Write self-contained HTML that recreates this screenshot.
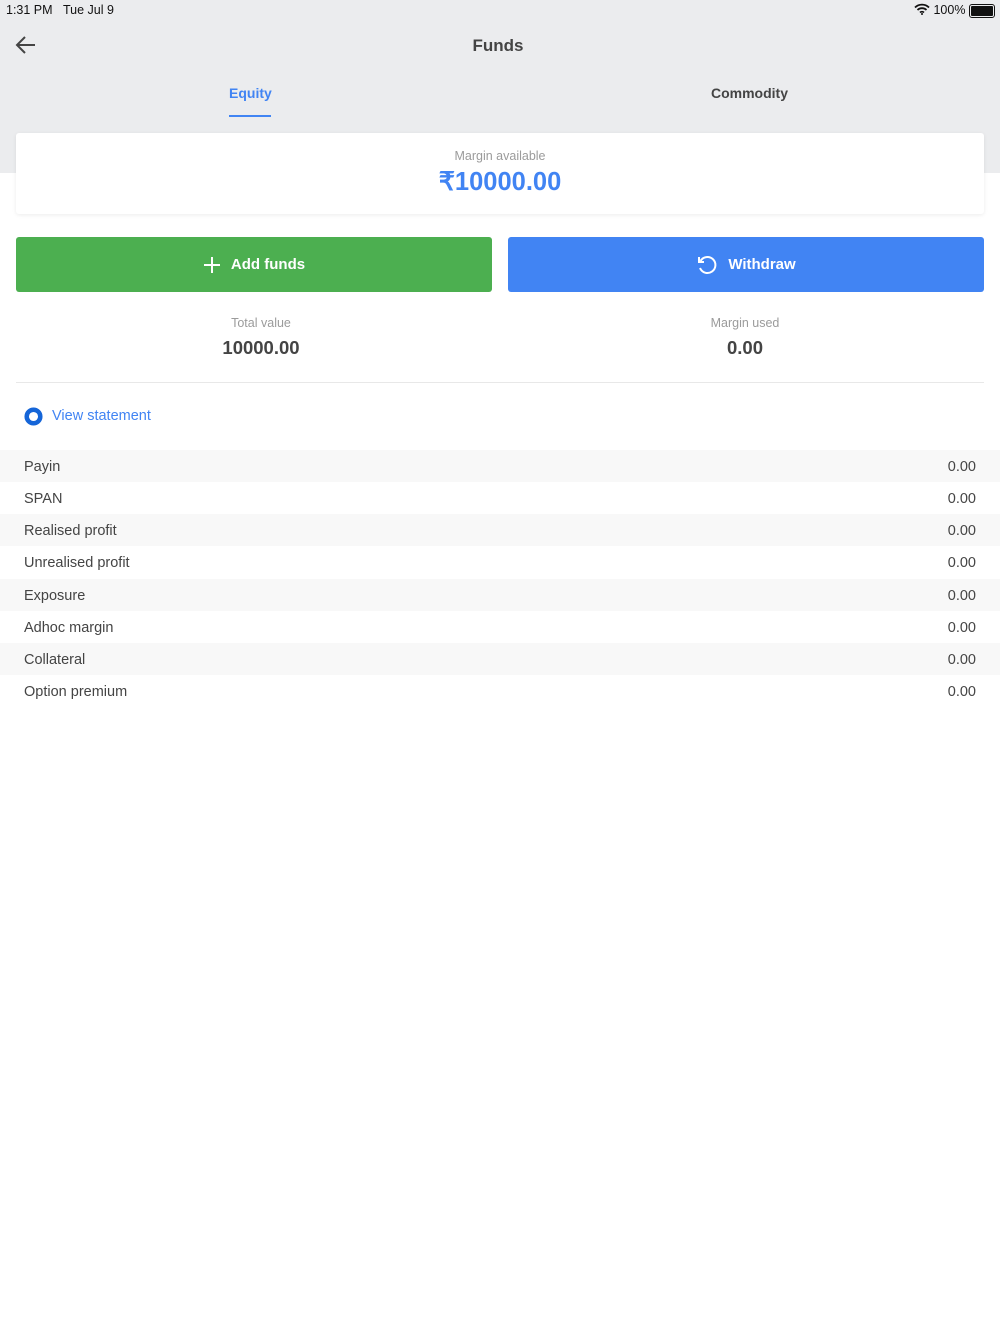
<!DOCTYPE html>
<html><head><meta charset="utf-8"><style>
body{margin:0;width:1000px;height:1334px;background:#fff;font-family:"Liberation Sans",sans-serif;color:#444;position:relative;overflow:hidden}
.hdr{position:absolute;left:0;top:0;width:1000px;height:173px;background:#ebecee}
.abs{position:absolute}
.card{position:absolute;left:16px;top:133px;width:968px;height:81px;background:#fff;border-radius:3px;box-shadow:0 1px 4px rgba(0,0,0,.08);text-align:center}
.btn{position:absolute;top:237px;height:55px;width:476px;border-radius:3px;color:#fff;font-weight:bold;font-size:15px;display:flex;align-items:center;justify-content:center;gap:10px}
.row{position:absolute;left:0;width:1000px;height:32px;font-size:14.5px;color:#444;line-height:34px}
.row span{position:absolute}
.row .l{left:24px}.row .r{right:24px}
.alt{background:#f8f8f8}
</style></head><body>
<div class="hdr"></div>
<div class="abs" style="left:6px;top:3px;font-size:12.5px;color:#111">1:31 PM&nbsp;&nbsp;&nbsp;Tue Jul 9</div>
<div class="abs" style="left:914px;top:3px;font-size:12.5px;color:#111">
<svg width="16" height="12" viewBox="0 0 16 12" style="vertical-align:-1px"><path d="M1 4.5a10 10 0 0 1 14 0M3.5 7a6.5 6.5 0 0 1 9 0M6 9.5a3 3 0 0 1 4 0" stroke="#111" stroke-width="1.8" fill="none"/><circle cx="8" cy="11" r="1" fill="#111"/></svg> 100%</div>
<div class="abs" style="left:969px;top:4px;width:22px;height:10px;border:1px solid #111;border-radius:3px;padding:1px;box-sizing:content-box"><div style="width:100%;height:100%;background:#111;border-radius:1px"></div></div>
<svg class="abs" style="left:14px;top:34px" width="24" height="22" viewBox="0 0 24 22"><path d="M21 11H3M11 3l-8 8 8 8" stroke="#444" stroke-width="2" fill="none"/></svg>
<div class="abs" style="left:0;width:996px;top:36px;text-align:center;font-size:17px;font-weight:bold;color:#444">Funds</div>
<div class="abs" style="left:229px;top:85px;font-size:14px;font-weight:bold;color:#4184f3">Equity</div>
<div class="abs" style="left:229px;top:115px;width:42px;height:2px;background:#4184f3"></div>
<div class="abs" style="left:711px;top:85px;font-size:14px;font-weight:bold;color:#444">Commodity</div>
<div class="card"><div style="margin-top:16px;font-size:12.5px;color:#9b9b9b">Margin available</div><div style="margin-top:4px;font-size:25.5px;font-weight:bold;color:#4184f3">₹10000.00</div></div>
<div class="btn" style="left:16px;background:#4caf50"><svg width="18" height="18" viewBox="0 0 18 18"><path d="M9 1v16M1 9h16" stroke="#fff" stroke-width="2"/></svg>Add funds</div>
<div class="btn" style="left:508px;background:#4184f3"><svg width="22" height="22" viewBox="0 0 22 22"><path d="M4.5 7A8 8 0 1 1 4 14" stroke="#fff" stroke-width="2" fill="none"/><path d="M3 3v5h5" stroke="#fff" stroke-width="2" fill="none"/></svg>Withdraw</div>
<div class="abs" style="left:161px;width:200px;top:316px;text-align:center;font-size:12.5px;color:#9b9b9b">Total value</div>
<div class="abs" style="left:161px;width:200px;top:337px;text-align:center;font-size:18.5px;font-weight:bold;color:#444">10000.00</div>
<div class="abs" style="left:645px;width:200px;top:316px;text-align:center;font-size:12.5px;color:#9b9b9b">Margin used</div>
<div class="abs" style="left:645px;width:200px;top:337px;text-align:center;font-size:18.5px;font-weight:bold;color:#444">0.00</div>
<div class="abs" style="left:16px;top:382px;width:968px;height:1px;background:#e8e8e8"></div>
<svg class="abs" style="left:24px;top:407px" width="19" height="19" viewBox="0 0 19 19"><circle cx="9.5" cy="9.5" r="6.8" stroke="#1565d8" stroke-width="4.5" fill="none"/></svg>
<div class="abs" style="left:52px;top:408px;font-size:14.5px;color:#4184f3">View statement</div>
<div class="row alt" style="top:450px"><span class="l">Payin</span><span class="r">0.00</span></div>
<div class="row" style="top:482px"><span class="l">SPAN</span><span class="r">0.00</span></div>
<div class="row alt" style="top:514px"><span class="l">Realised profit</span><span class="r">0.00</span></div>
<div class="row" style="top:546px"><span class="l">Unrealised profit</span><span class="r">0.00</span></div>
<div class="row alt" style="top:579px"><span class="l">Exposure</span><span class="r">0.00</span></div>
<div class="row" style="top:611px"><span class="l">Adhoc margin</span><span class="r">0.00</span></div>
<div class="row alt" style="top:643px"><span class="l">Collateral</span><span class="r">0.00</span></div>
<div class="row" style="top:675px"><span class="l">Option premium</span><span class="r">0.00</span></div>
</body></html>
